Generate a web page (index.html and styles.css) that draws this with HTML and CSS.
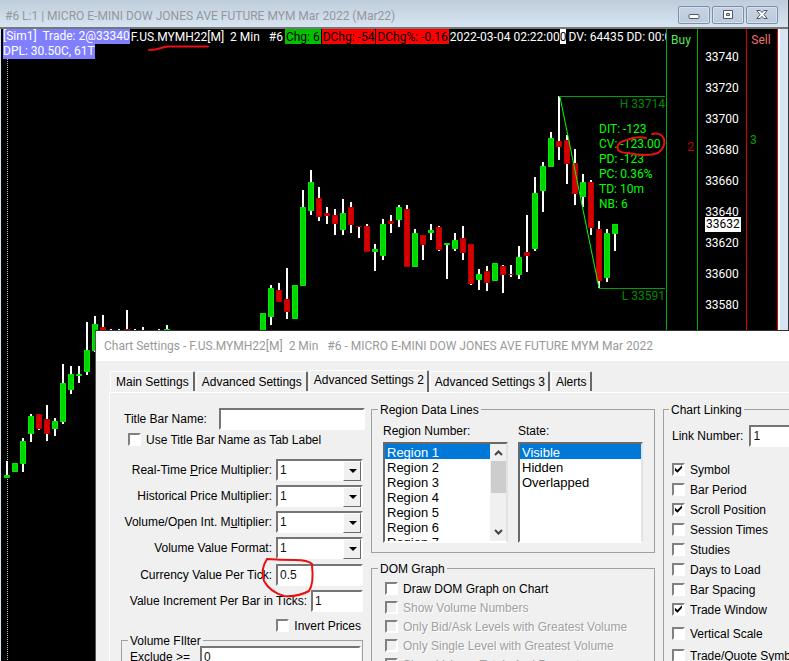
FILE: index.html
```html
<!DOCTYPE html>
<html lang="en">
<head>
<meta charset="utf-8">
<title>MYM Mar 2022 - Chart Settings</title>
<link rel="stylesheet" href="styles.css">
</head>
<body>
<main class="chart-window">
  <header class="titlebar">
    <h1>#6 L:1 | MICRO E-MINI DOW JONES AVE FUTURE MYM Mar 2022 (Mar22)</h1>
    <div class="window-buttons">
      <button type="button" aria-label="Minimize"><svg width="12" height="10" viewBox="0 0 12 10"><rect x="1" y="4.500" width="10" height="4" rx="1" fill="#fff" stroke="#50566a"/></svg></button>
      <button type="button" aria-label="Maximize"><svg width="12" height="10" viewBox="0 0 12 10"><path fill="#fff" fill-rule="evenodd" stroke="#50566a" d="M1.500.5h9v8h-9zM4.500 3.500h3v2h-3z"/></svg></button>
      <button type="button" aria-label="Close"><svg width="12" height="10" viewBox="0 0 12 10"><path fill="#fff" stroke="#50566a" d="M.8.5h3.400L6 2.600 7.800.5h3.400L8 4.500l3.200 4H7.800L6 6.400 4.200 8.500H.8L4 4.500z"/></svg></button>
    </div>
  </header>
  <div class="chart-body">
    <section class="plot">
      <svg class="candles" width="665" height="632" viewBox="1 29 665 632" aria-hidden="true">
        <path class="session" d="M7.500 29V661"/>
        <path class="wicks" d="M7 461V478M23 438V472M31 414V442M39 414V430M47 405V441M55 418V436M63 364V424M71 366V394M79 366V383M87 322V375M95 316V352M103 315V332M111 329V332M119 329V332M127 310V332M135 329V332M143 327V332M159 329V332M167 325V332M271 285V325M279 283V302M287 268V319M303 190V286M311 170V215M319 187V221M327 207V224M335 209V235M343 199V235M351 202V233M359 226V238M367 224V252M375 244V271M383 219V260M391 215V233M399 205V227M407 205V267M415 229V267M423 235V260M431 224V240M439 226V251M447 243V279M455 233V251M463 226V260M471 244V285M479 269V290M487 266V291M503 265V293M511 265V277M519 246V279M527 215V272M535 177V251M543 162V212M551 132V167M559 96V160M567 135V184M575 149V205M583 174V207M591 180V235M599 221V288M607 229V282M615 224V251"/>
        <g transform="translate(.5 .5)">
          <path class="up" d="M4 475h5v2h-5zM12 463h5v8h-5zM20 441h5v22h-5zM28 416h5v17h-5zM52 421h5v7h-5zM60 383h5v38h-5zM68 374h5v15h-5zM76 374h5v1h-5zM84 350h5v21h-5zM92 324h5v26h-5zM164 329h5v5h-5zM260 313h5v20h-5zM268 288h5v28h-5zM292 285h5v33h-5zM300 207h5v78h-5zM308 182h5v28h-5zM340 213h5v16h-5zM372 249h5v2h-5zM380 224h5v31h-5zM396 207h5v12h-5zM412 233h5v33h-5zM428 230h5v2h-5zM444 243h5v1h-5zM452 240h5v8h-5zM476 274h5v5h-5zM492 263h5v17h-5zM516 257h5v17h-5zM532 193h5v55h-5zM540 166h5v24h-5zM548 138h5v28h-5zM580 182h5v14h-5zM604 233h5v44h-5zM612 224h5v9h-5z"/>
          <path class="down" d="M36 414h5v14h-5zM44 419h5v14h-5zM100 327h5v6h-5zM124 329h5v5h-5zM140 330h5v5h-5zM148 330h5v5h-5zM276 290h5v11h-5zM284 299h5v12h-5zM316 198h5v18h-5zM324 213h5v2h-5zM332 215h5v8h-5zM348 207h5v17h-5zM356 226h5v0h-5zM364 226h5v25h-5zM388 221h5v2h-5zM404 209h5v57h-5zM420 235h5v9h-5zM436 227h5v22h-5zM460 238h5v14h-5zM468 244h5v39h-5zM484 271h5v11h-5zM500 266h5v8h-5zM508 274h5v0h-5zM524 252h5v3h-5zM556 141h5v5h-5zM564 140h5v23h-5zM572 163h5v30h-5zM588 182h5v45h-5zM596 229h5v51h-5z"/>
        </g>
        <path class="range" d="M559 96.500H665M599 288.500H665"/>
        <path class="swing" d="M560 97L599 288"/>
        <g class="levels" text-anchor="end"><text x="665" y="108">H 33714</text><text x="665" y="300">L 33591</text></g>
        <g class="stats">
          <text x="599" y="133">DIT: -123</text><text x="599" y="148">CV: -123.00</text><text x="599" y="163">PD: -123</text>
          <text x="599" y="178">PC: 0.36%</text><text x="599" y="193">TD: 10m</text><text x="599" y="208">NB: 6</text>
        </g>
      </svg>
      <div class="infobar">
        <p class="trade"><span>[Sim1]&nbsp; Trade: 2@33340</span><br><span>DPL: 30.50C, 61T</span></p>
        <p class="symbol">F.US.MYMH22[M]&nbsp; 2 Min&nbsp;&nbsp; #6</p>
        <p class="chg gain">Chg: 6</p>
        <p class="chg loss">DChg: -54</p>
        <p class="chg loss">DChg%: -0.16</p>
        <p class="stamp">2022-03-04 02:22:00</p>
        <p class="flag">0</p>
        <p class="volume">DV: 64435 DD: 00:0</p>
      </div>
    </section>
    <section class="ladder buy"><h2>Buy</h2><span class="qty">2</span></section>
    <section class="scale">
      <ol><li>33740</li><li>33720</li><li>33700</li><li>33680</li><li>33660</li><li>33640</li><li>33620</li><li>33600</li><li>33580</li></ol>
      <span class="last">33632</span>
    </section>
    <section class="ladder sell"><h2>Sell</h2><span class="qty">3</span></section>
  </div>
</main>

<div class="dialog" role="dialog" aria-labelledby="dlg-title">
  <h2 class="dialog-title" id="dlg-title">Chart Settings - F.US.MYMH22[M]&nbsp; 2 Min&nbsp;&nbsp; #6 - MICRO E-MINI DOW JONES AVE FUTURE MYM Mar 2022</h2>
  <div class="tabs" role="tablist">
    <button type="button" role="tab">Main Settings</button>
    <button type="button" role="tab">Advanced Settings</button>
    <button type="button" role="tab" class="active" aria-selected="true">Advanced Settings 2</button>
    <button type="button" role="tab">Advanced Settings 3</button>
    <button type="button" role="tab">Alerts</button>
  </div>
  <form class="pane">
    <div class="general">
      <div class="name-row"><label for="tbn">Title Bar Name:</label><input id="tbn" class="field" type="text"></div>
      <label class="check name-check"><input type="checkbox"><span>Use Title Bar Name as Tab Label</span></label>
      <div class="rows">
        <div class="row"><label for="rt">Real-Time <u>P</u>rice Multiplier:</label><span class="combo"><select id="rt" class="field"><option>1</option></select></span></div>
        <div class="row"><label for="hp">Historical Price Multiplier:</label><span class="combo"><select id="hp" class="field"><option>1</option></select></span></div>
        <div class="row"><label for="vo">Volume/Open Int. M<u>u</u>ltiplier:</label><span class="combo"><select id="vo" class="field"><option>1</option></select></span></div>
        <div class="row"><label for="vf">Volume Value Format:</label><span class="combo"><select id="vf" class="field"><option>1</option></select></span></div>
      </div>
      <div class="rows">
        <div class="row"><label for="cv">Currency Value Per Tick:</label><input id="cv" class="field" type="text" value="0.5"></div>
        <div class="row narrow"><label for="vi">Value Increment Per Bar in Ticks:</label><input id="vi" class="field" type="text" value="1"></div>
      </div>
      <label class="check invert"><input type="checkbox"><span>Invert Prices</span></label>
      <fieldset class="filter"><legend>Volume FIlter</legend>
        <div class="filter-row"><label for="ex">Exclude &gt;=</label><input id="ex" class="field" type="text" value="0"></div>
      </fieldset>
    </div>
    <div class="middle">
      <fieldset class="regions"><legend>Region Data Lines</legend>
        <div class="lists">
          <div class="list"><label for="rn">Region Number:</label>
            <div class="listbox"><select id="rn" size="7"><option selected>Region 1</option><option>Region 2</option><option>Region 3</option><option>Region 4</option><option>Region 5</option><option>Region 6</option><option>Region 7</option></select>
              <div class="scroll" aria-hidden="true"><svg width="9" height="6" viewBox="0 0 9 6"><path d="M1 5l3.500-3.500L8 5"/></svg><i></i><svg width="9" height="6" viewBox="0 0 9 6"><path d="M1 1l3.500 3.500L8 1"/></svg></div>
            </div></div>
          <div class="list"><label for="st">State:</label>
            <div class="listbox"><select id="st" size="7"><option selected>Visible</option><option>Hidden</option><option>Overlapped</option></select></div></div>
        </div>
      </fieldset>
      <fieldset class="dom"><legend>DOM Graph</legend>
        <label class="check"><input type="checkbox"><span>Draw DOM Graph on Chart</span></label>
        <label class="check"><input type="checkbox" disabled><span>Show Volume Numbers</span></label>
        <label class="check"><input type="checkbox" disabled><span>Only Bid/Ask Levels with Greatest Volume</span></label>
        <label class="check"><input type="checkbox" disabled><span>Only Single Level with Greatest Volume</span></label>
        <label class="check"><input type="checkbox" disabled><span>Show Volume Totals And Percent</span></label>
      </fieldset>
    </div>
    <fieldset class="linking"><legend>Chart Linking</legend>
      <div class="link-row"><label for="ln">Link Number:</label><input id="ln" class="field" type="text" value="1"></div>
      <div class="link-group">
        <label class="check"><input type="checkbox" checked><span>Symbol</span></label>
        <label class="check"><input type="checkbox"><span>Bar Period</span></label>
        <label class="check"><input type="checkbox" checked><span>Scroll Position</span></label>
        <label class="check"><input type="checkbox"><span>Session Times</span></label>
        <label class="check"><input type="checkbox"><span>Studies</span></label>
        <label class="check"><input type="checkbox"><span>Days to Load</span></label>
        <label class="check"><input type="checkbox"><span>Bar Spacing</span></label>
        <label class="check"><input type="checkbox" checked><span>Trade Window</span></label>
      </div>
      <div class="link-group loose">
        <label class="check"><input type="checkbox"><span>Vertical Scale</span></label>
        <label class="check"><input type="checkbox"><span>Trade/Quote Symbol</span></label>
      </div>
    </fieldset>
  </form>
</div>

<svg class="markup" width="789" height="661" viewBox="0 0 789 661" aria-hidden="true">
  <path d="M149 50Q156 50 161 48T170 46.500H208"/>
  <path d="M646 138Q635 136 627 140Q617 142 617.500 148Q618 153 628 153Q648 157 658 153Q666 147 664 139Q661 132 652 134"/>
  <path d="M312 564Q308 560 295 560Q280 560 267 559Q260 570 264 581Q270 592 284 596Q298 597 309 591Q314 584 312 565"/>
</svg>
</body>
</html>
```
FILE: styles.css
```css
* { box-sizing: border-box; }
body { margin: 0; height: 100vh; overflow: hidden; position: relative; background: #d7e4f2; font: 12px/15px "Liberation Sans", Arial, sans-serif; color: #000; }
h1, h2, p, ol { margin: 0; padding: 0; font-weight: normal; }
button, input, select { font: inherit; color: inherit; margin: 0; }

.chart-window { height: 100%; display: flex; flex-direction: column; padding: 0 8px 0 1px; border-right: 1px solid #333; font: 12px/15px Roboto, "Noto Sans", sans-serif; }
.titlebar { flex: none; height: 29px; margin: 0 -8px 0 -1px; padding: 2px 10px 0 5px; display: flex; justify-content: space-between; align-items: center; background: linear-gradient(#bfcddb, #d7e4f2); border-bottom: 2px solid #777; }
.titlebar h1 { font-size: 12px; line-height: 15px; padding-top: 4px; color: #94979c; white-space: nowrap; }
.window-buttons { display: flex; gap: 2px; }
.window-buttons button { width: 32px; height: 18px; padding: 0; display: flex; align-items: center; justify-content: center; border: 1px solid #7f8fa9; border-radius: 2px; background: linear-gradient(#c6d3e2, #bccbdd); box-shadow: inset 0 0 0 1px #d5e0ec; }

.chart-body { flex: 1; min-height: 0; display: grid; grid-template-columns: 1fr 31px 49px 32px; background: #000; border-right: 2px solid #fff; }
.plot { position: relative; overflow: hidden; min-width: 0; }
.candles { display: block; }
.session { stroke: #bbb; stroke-dasharray: 1 1; }
.wicks { stroke: #fff; stroke-width: 2; }
.up { fill: #00d400; stroke: #00f000; }
.down { fill: #d60000; stroke: #c00000; }
.range { stroke: #00a000; }
.swing { stroke: #00ff00; }
.levels { fill: #008a00; }
.stats { fill: #00ff00; }
.infobar { position: absolute; inset: 0 0 auto 2px; display: flex; color: #fff; white-space: pre; overflow: hidden; line-height: 16px; }
.infobar p { flex: none; height: 15px; }
.infobar .trade { height: 30px; line-height: 15px; }
.trade span { display: inline-block; background: #8080ff; }
.symbol { padding: 0 2px 0 1px; }
.chg { color: #000; padding: 0 1px; margin-right: 1px; }
.gain { background: #00c000; }
.loss { background: #ff0000; }
.flag { background: #fff; color: #000; }
.volume { padding-left: 2px; }

.ladder, .scale { position: relative; }
.ladder h2 { font-size: 12px; line-height: 15px; padding-top: 4px; text-align: center; }
.buy { border-left: 1px solid #00b000; color: #55e855; }
.sell { border-left: 1px solid #dc0000; border-right: 1px solid #dc0000; color: #f07070; }
.buy h2, .sell h2 { padding-right: 2px; }
.qty { position: absolute; }
.buy .qty { right: 3px; top: 111px; color: #c80000; }
.sell .qty { left: 3px; top: 104px; color: #00a000; }
.scale { border-left: 1px solid #00b000; color: #fff; text-align: center; padding-top: 13px; }
.scale ol { list-style: none; line-height: 31px; }
.last { position: absolute; left: 7px; top: 188px; padding: 0 1px; background: #fff; color: #000; }

.dialog { position: absolute; inset: 330px 0 0 95px; overflow: hidden; background: #f0f0f0; border-top: 1px solid #333; border-left: 1px solid #555; }
.dialog-title { height: 30px; padding-left: 8px; background: #fff; color: #999; font: 12px/30px Roboto, "Noto Sans", sans-serif; white-space: nowrap; }
.tabs { display: flex; align-items: flex-end; gap: 1px; height: 31px; padding: 0 0 1px 14px; }
.tabs button { height: 20px; padding: 2px 4px 0 5px; background: #f0f0f0; border: 1px solid #fff; border-right: 2px solid #696969; border-bottom: 0; border-radius: 2px 2px 0 0; white-space: nowrap; line-height: 15px; }
.tabs .active { height: 22px; padding: 0 4px 2px 5px; margin-bottom: -1px; position: relative; }
.tabs button:nth-child(n+3) { padding-left: 4px; padding-right: 3px; }
.pane { margin-left: 13px; height: 400px; border-top: 1px solid #fff; border-left: 1px solid #fff; display: flex; gap: 6px; padding: 9px 0 0 9px; }
label { white-space: nowrap; }
.field { min-width: 0; height: 22px; padding: 0 2px; border: 2px solid; border-color: #757575 #fff #fff #757575; border-radius: 0; background: #fff; color: #111; outline: none; }
.general { width: 246px; flex: none; padding-top: 6px; }
.name-row { display: flex; align-items: center; justify-content: space-between; padding-left: 5px; }
.name-row .field { width: 146px; }
.check { display: flex; align-items: center; gap: 5px; height: 19px; }
.check span { padding-top: 2px; }
.check input { appearance: none; flex: none; width: 13px; height: 13px; border: 2px solid; border-color: #808080 #fff #fff #808080; background: #fff; display: grid; }
.check input:disabled { background: #f0f0f0; }
.check input:disabled + span { color: #a0a0a0; text-shadow: 1px 1px #fff; }
.check input:checked::before { content: ""; width: 9px; height: 9px; background: #000; clip-path: polygon(10% 35%, 38% 60%, 88% 8%, 88% 40%, 38% 92%, 10% 67%); }
.name-check { padding-left: 9px; margin-bottom: 10px; }
.rows { display: grid; gap: 4px; margin-bottom: 5px; }
.row { display: flex; justify-content: flex-end; align-items: center; gap: 4px; padding-right: 2px; }
.row .field { width: 87px; }
.row.narrow .field { width: 52px; }
.combo { position: relative; display: flex; }
.combo select { appearance: none; }
.combo::before { content: ""; position: absolute; right: 2px; top: 2px; width: 16px; height: 18px; background: #f0f0f0; border: 1px solid; border-color: #fff #696969 #696969 #fff; pointer-events: none; }
.combo::after { content: ""; position: absolute; right: 6px; top: 10px; border: 4px solid transparent; border-top-color: #000; border-bottom: 0; pointer-events: none; }
.invert { justify-content: flex-end; padding-right: 4px; height: 16px; }
fieldset { position: relative; margin: 0; padding: 0; min-width: 0; border: 1px solid #a0a0a0; }
legend { margin-left: 6px; padding: 1px 2px 0; height: 15px; }
.filter { margin: 0 2px; height: 60px; }
.filter-row { display: flex; align-items: center; gap: 10px; padding: 0 1px 0 8px; margin-top: -2px; }
.filter-row .field { flex: 1; }
.middle { width: 284px; flex: none; }
.regions { height: 151px; }
.lists { display: flex; gap: 10px; padding: 7px 11px; }
.list { flex: 1; min-width: 0; }
.list label { display: block; height: 18px; }
.listbox { height: 101px; display: flex; background: #fff; border: 2px solid; border-color: #696969 #e3e3e3 #fff #696969; overflow: hidden; }
.listbox select { flex: 1; min-width: 0; height: 106px; border: 0; border-radius: 0; padding: 0; background: #fff; overflow: hidden; outline: none; font-size: 13px; }
.listbox option { height: 15px; min-height: 15px; padding: 1px 2px 0; line-height: 15px; }
.listbox option:checked { background: #0078d7 linear-gradient(#0078d7, #0078d7); color: #fff; -webkit-text-fill-color: #fff; }
.scroll { width: 16px; background: #f0f0f0; display: flex; flex-direction: column; align-items: center; padding: 6px 0; }
.scroll i { width: 15px; height: 32px; margin: 5px 0 auto; background: #cdcdcd; }
.scroll path { fill: none; stroke: #444; stroke-width: 2; }
.dom { margin-top: 8px; height: 200px; }
.dom legend { margin-bottom: 3px; }
.dom .check { padding-left: 13px; }
.linking { flex: none; width: 200px; margin-left: 2px; }
.linking legend { margin-left: 5px; }
.link-row { display: flex; align-items: center; gap: 6px; padding-left: 8px; margin-top: 8px; margin-bottom: 12px; }
.link-row .field { width: 60px; }
.link-group { padding-left: 8px; }
.link-group .check { height: 20px; }
.link-group.loose { padding-top: 3px; }
.link-group.loose .check { height: 22px; }

.markup { position: absolute; inset: 0 auto auto 0; pointer-events: none; }
.markup path { fill: none; stroke: #e81010; stroke-width: 2; stroke-linecap: round; }
```
